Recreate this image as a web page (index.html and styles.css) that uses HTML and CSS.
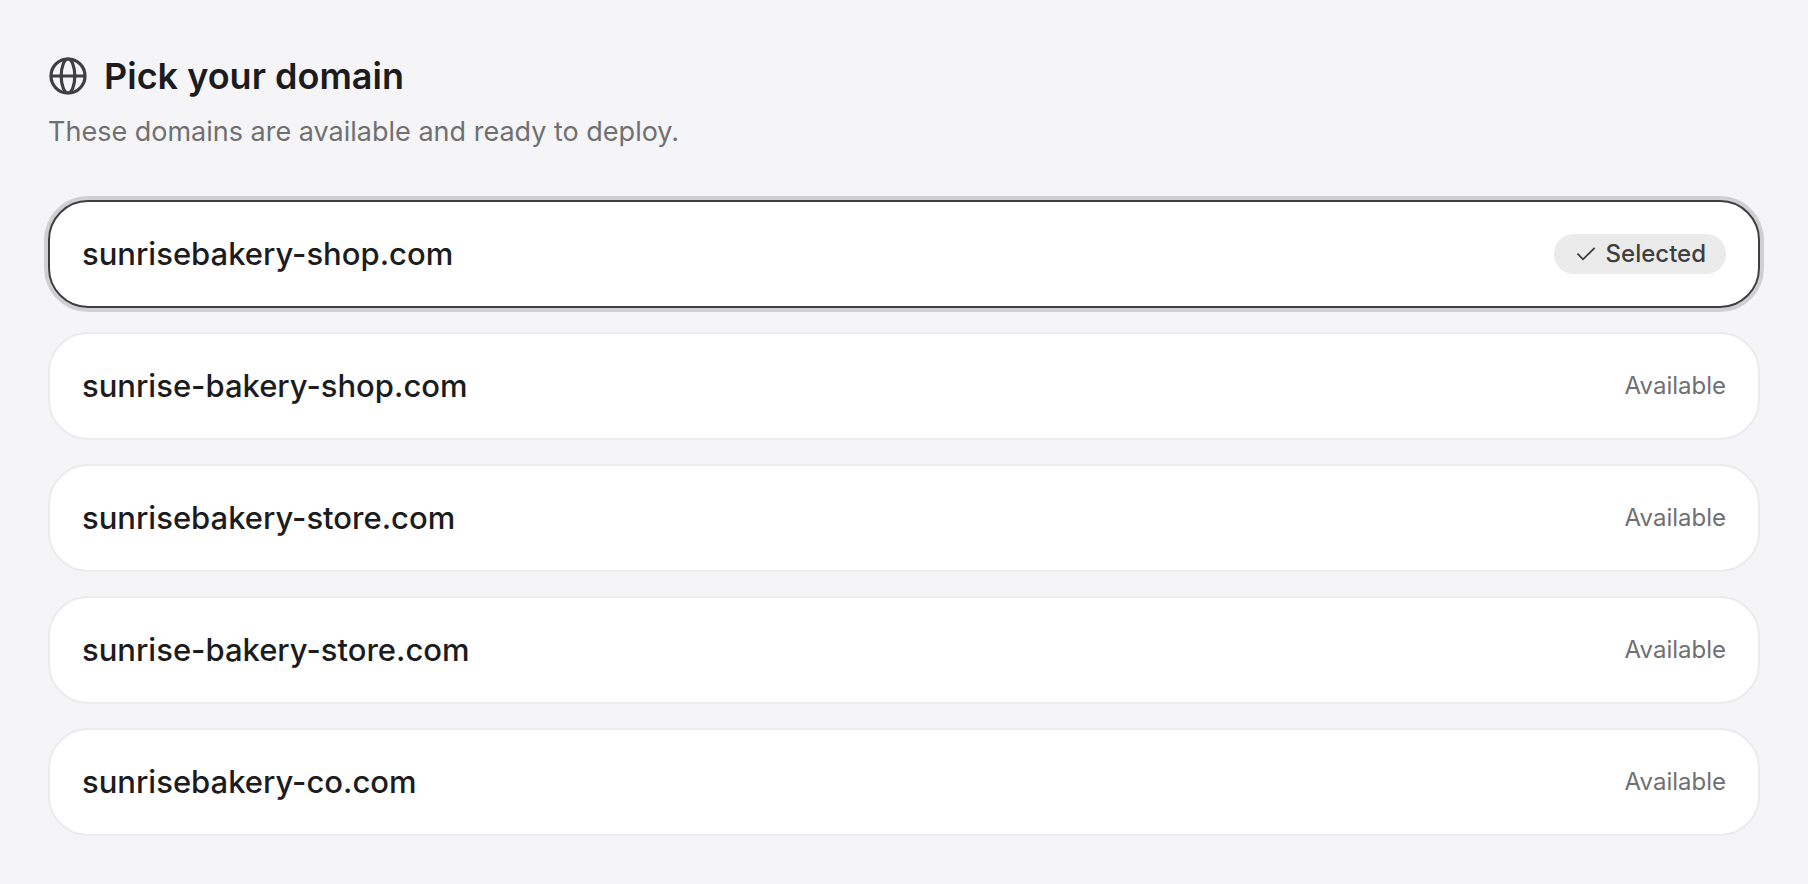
FILE: index.html
```html
<!DOCTYPE html>
<html lang="en">
<head>
<meta charset="utf-8">
<meta name="viewport" content="width=device-width, initial-scale=1">
<title>Pick your domain</title>
<link rel="stylesheet" href="styles.css">
</head>
<body>
<main class="picker">
  <header class="picker-header">
    <h1 class="title">
      <svg class="globe" viewBox="0 0 40 40" aria-hidden="true"><circle cx="20" cy="20" r="17"/><ellipse cx="20" cy="20" rx="6.8" ry="17"/><path d="M3 20h34"/></svg>
      Pick your domain
    </h1>
    <p class="subtitle">These domains are available and ready to deploy.</p>
  </header>
  <div class="domains">
    <button type="button" class="domain is-selected" aria-pressed="true">
      <span class="name">sunrisebakery-shop.com</span>
      <span class="badge"><svg class="check" viewBox="0 0 24 24" aria-hidden="true"><path d="M3.5 11.7l5.5 5.6L20.7 5.8"/></svg>Selected</span>
    </button>
    <button type="button" class="domain" aria-pressed="false">
      <span class="name">sunrise-bakery-shop.com</span><span class="status">Available</span>
    </button>
    <button type="button" class="domain" aria-pressed="false">
      <span class="name">sunrisebakery-store.com</span><span class="status">Available</span>
    </button>
    <button type="button" class="domain" aria-pressed="false">
      <span class="name">sunrise-bakery-store.com</span><span class="status">Available</span>
    </button>
    <button type="button" class="domain" aria-pressed="false">
      <span class="name">sunrisebakery-co.com</span><span class="status">Available</span>
    </button>
  </div>
</main>
</body>
</html>
```
FILE: styles.css
```css
* { box-sizing: border-box; }
body {
  margin: 0;
  background: #f5f5f7;
  color: #1c1c1f;
  font-family: Inter, "Liberation Sans", sans-serif;
}
.picker { padding: 48px; }
.picker-header {
  display: flex;
  flex-direction: column;
  gap: 8px;
  margin-bottom: 48px;
}
.title {
  display: flex;
  align-items: center;
  gap: 16px;
  margin: 0;
  font-size: 36px;
  line-height: 56px;
  font-weight: 600;
}
.globe {
  width: 40px;
  height: 40px;
  fill: none;
  stroke: #3f3f42;
  stroke-width: 3.2;
}
.subtitle {
  margin: 0;
  color: #707072;
  font-size: 27px;
  line-height: 40px;
}
.domains {
  display: flex;
  flex-direction: column;
  gap: 24px;
}
.domain {
  display: flex;
  align-items: center;
  justify-content: space-between;
  width: 100%;
  padding: 32px;
  border: 2px solid #ebebec;
  border-radius: 40px;
  background: #fff;
  color: inherit;
  font: inherit;
  text-align: left;
  cursor: pointer;
}
.is-selected {
  border-color: #3f3f42;
  box-shadow: 0 0 0 4px #d0d0d2;
}
.name {
  font-size: 31px;
  line-height: 40px;
  font-weight: 500;
}
.status {
  color: #707072;
  font-size: 24px;
  line-height: 32px;
}
.badge {
  display: flex;
  align-items: center;
  gap: 8px;
  padding: 4px 20px;
  border-radius: 20px;
  background: #ebebeb;
  color: #3f3f42;
  font-size: 24px;
  line-height: 32px;
  font-weight: 500;
}
.check {
  width: 24px;
  height: 24px;
  fill: none;
  stroke: currentColor;
  stroke-width: 1.8;
}
```
